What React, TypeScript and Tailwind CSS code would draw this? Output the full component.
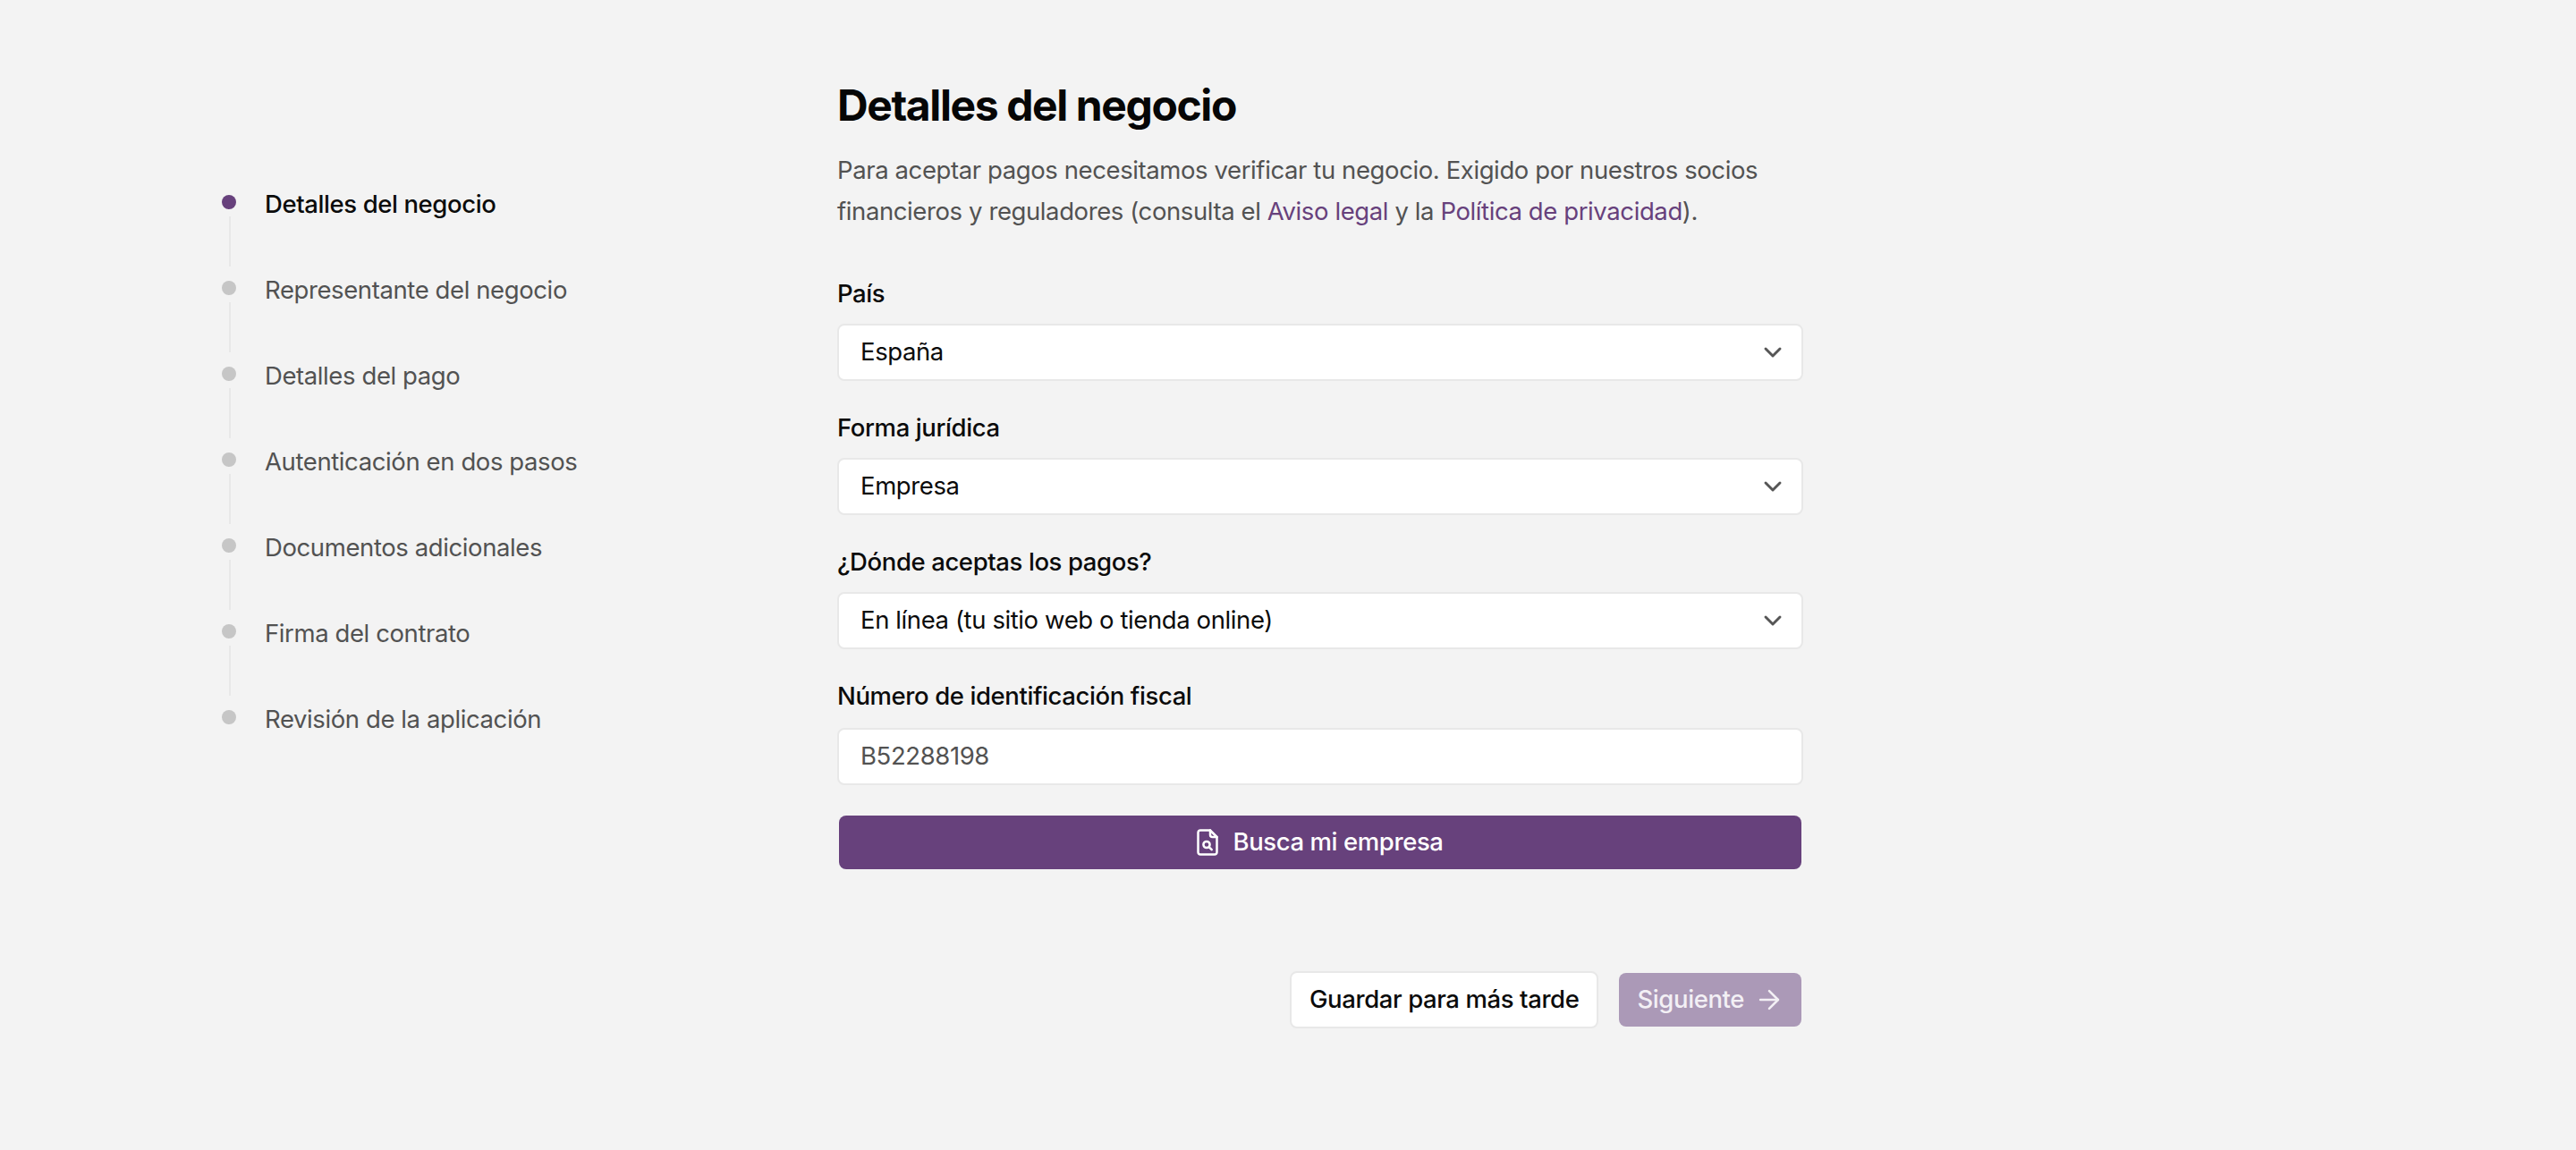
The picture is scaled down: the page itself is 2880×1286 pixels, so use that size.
import React from "react";
import { ChevronDown, ArrowRight } from "lucide-react";

const steps = [
  "Detalles del negocio",
  "Representante del negocio",
  "Detalles del pago",
  "Autenticación en dos pasos",
  "Documentos adicionales",
  "Firma del contrato",
  "Revisión de la aplicación",
];

function Step({ label, active, last }: { label: string; active: boolean; last: boolean }) {
  return (
    <div className="flex h-[96px]">
      <div className="flex w-[48px] shrink-0 flex-col">
        <span className={`h-4 w-4 rounded-full ${active ? "bg-[#67417c]" : "bg-[#c6c6c6]"}`} />
        {!last && <span className="ml-[8px] mt-2 h-[56px] w-[2px] bg-[#e8e8e8]" />}
      </div>
      <span className={`-mt-[2px] h-[24px] text-[27.5px] leading-[24px] tracking-[-0.4px] ${active ? "font-medium text-[#0b0b0b]" : "text-[#525252]"}`}>
        {label}
      </span>
    </div>
  );
}

function SelectField({ label, value }: { label: string; value: string }) {
  return (
    <div className="mb-[34px]">
      <label className="mb-[16px] block text-[27.5px] leading-[36px] font-medium tracking-[-0.4px] text-[#0b0b0b]">{label}</label>
      <div className="flex h-[64px] items-center justify-between rounded-lg border-2 border-[#e8e8e8] bg-white pl-[24px] pr-[16px]">
        <span className="text-[27.5px] tracking-[-0.4px] text-[#0b0b0b]">{value}</span>
        <ChevronDown className="h-[32px] w-[32px] text-[#565656]" strokeWidth={2.2} />
      </div>
    </div>
  );
}

function FileLensIcon() {
  return (
    <svg width="24" height="30" viewBox="0 0 24 30" fill="none" stroke="currentColor" strokeWidth="2.5" strokeLinecap="round" strokeLinejoin="round">
      <path d="M15 1.5H4a2.5 2.5 0 0 0-2.5 2.5v22a2.5 2.5 0 0 0 2.5 2.5h16a2.5 2.5 0 0 0 2.5-2.5V9z" />
      <path d="M15 1.5v5a2.5 2.5 0 0 0 2.5 2.5h5" />
      <circle cx="11" cy="17.5" r="3.6" />
      <path d="M13.8 20.3l2.9 2.9" />
    </svg>
  );
}

export default function App() {
  return (
    <div className="flex min-h-screen bg-[#f3f3f3] font-['Inter',sans-serif]">
      <aside className="w-[936px] shrink-0 pl-[248px] pt-[218px]">
        {steps.map((s, i) => (
          <Step key={s} label={s} active={i === 0} last={i === steps.length - 1} />
        ))}
      </aside>
      <main className="w-[1080px] pt-[84px]">
        <h1 className="text-[48px] leading-[68px] font-[650] tracking-[-1.4px] text-[#060606]">Detalles del negocio</h1>
        <p className="mt-[15px] text-[27.5px] leading-[46px] tracking-[-0.4px] text-[#525252]">
          Para aceptar pagos necesitamos verificar tu negocio. Exigido por nuestros socios financieros y reguladores (consulta el{" "}
          <a className="text-[#67417c]">Aviso legal</a> y la <a className="text-[#67417c]">Política de privacidad</a>).
        </p>
        <div className="mt-[51px]">
          <SelectField label="País" value="España" />
          <SelectField label="Forma jurídica" value="Empresa" />
          <SelectField label="¿Dónde aceptas los pagos?" value="En línea (tu sitio web o tienda online)" />
          <label className="mb-[18px] block text-[27.5px] leading-[36px] font-medium tracking-[-0.4px] text-[#0b0b0b]">Número de identificación fiscal</label>
          <div className="flex h-[64px] items-center rounded-lg border-2 border-[#e8e8e8] bg-white px-[24px]">
            <span className="text-[27.5px] tracking-[-0.4px] text-[#525252]">B52288198</span>
          </div>
          <button className="mx-[2px] mt-[34px] flex h-[60px] w-[1076px] items-center justify-center gap-[16px] rounded-lg bg-[#67417c] text-[27.5px] font-medium tracking-[-0.4px] text-white">
            <FileLensIcon />
            Busca mi empresa
          </button>
        </div>
        <div className="mt-[114px] flex items-center justify-end gap-[23px] pr-[2px]">
          <button className="h-[64px] rounded-lg border-2 border-[#e8e8e8] bg-white px-[20px] text-[27.5px] font-medium tracking-[-0.4px] text-[#0b0b0b]">
            Guardar para más tarde
          </button>
          <button className="flex h-[60px] items-center gap-[11px] rounded-lg bg-[#ab99b7] pl-[20px] pr-[19px] text-[27.5px] font-medium tracking-[-0.4px] text-[#f3f0f5]">
            Siguiente
            <ArrowRight className="h-[34px] w-[34px]" strokeWidth={1.8} />
          </button>
        </div>
      </main>
    </div>
  );
}
